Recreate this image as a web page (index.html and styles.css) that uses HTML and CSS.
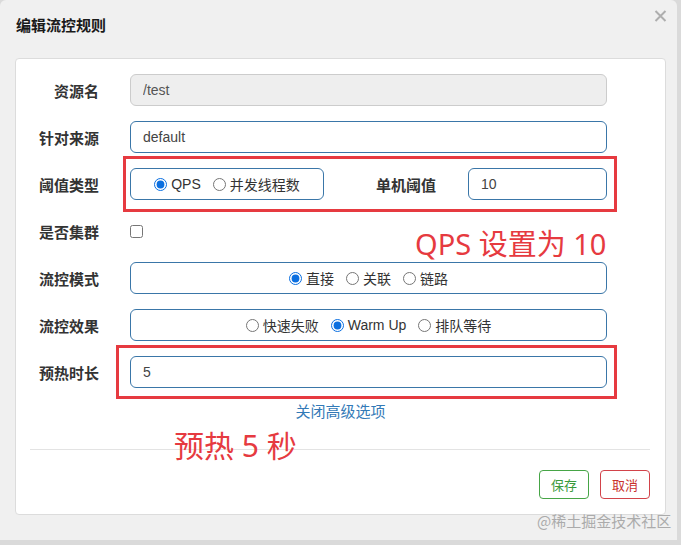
FILE: index.html
```html
<!DOCTYPE html>
<html lang="zh-CN">
<head>
    <meta charset="UTF-8">
    <meta name="viewport" content="width=device-width, initial-scale=1.0">
    <title>编辑流控规则</title>
    <link rel="stylesheet" href="styles.css">
</head>
<body>
    <div class="dialog">
        <!-- Cabecera -->
        <div class="dialog-header">
            <h4 class="dialog-title">编辑流控规则</h4>
            <button class="close" type="button">
                <svg width="13" height="12" viewBox="0 0 13 12">
                    <path d="M1.5 1 L11.5 11 M11.5 1 L1.5 11" stroke="#aeaeae" stroke-width="2" fill="none"/>
                </svg>
            </button>
        </div>

        <div class="dialog-body">
            <div class="panel">
                <form class="rule-form">
                    <div class="form-row">
                        <label class="form-label">资源名</label>
                        <input class="form-control" type="text" value="/test" disabled>
                    </div>

                    <div class="form-row">
                        <label class="form-label">针对来源</label>
                        <input class="form-control" type="text" value="default">
                    </div>

                    <div class="form-row">
                        <label class="form-label">阈值类型</label>
                        <div class="split">
                            <div class="radio-group small">
                                <label class="radio"><input type="radio" name="grade" checked>QPS</label>
                                <label class="radio"><input type="radio" name="grade">并发线程数</label>
                            </div>
                            <label class="form-label inline">单机阈值</label>
                            <input class="form-control count" type="text" value="10">
                        </div>
                    </div>

                    <div class="form-row">
                        <label class="form-label">是否集群</label>
                        <div><input class="check" type="checkbox"></div>
                    </div>

                    <div class="form-row">
                        <label class="form-label">流控模式</label>
                        <div class="radio-group">
                            <label class="radio"><input type="radio" name="strategy" checked>直接</label>
                            <label class="radio"><input type="radio" name="strategy">关联</label>
                            <label class="radio"><input type="radio" name="strategy">链路</label>
                        </div>
                    </div>

                    <div class="form-row">
                        <label class="form-label">流控效果</label>
                        <div class="radio-group">
                            <label class="radio"><input type="radio" name="behavior">快速失败</label>
                            <label class="radio"><input type="radio" name="behavior" checked>Warm Up</label>
                            <label class="radio"><input type="radio" name="behavior">排队等待</label>
                        </div>
                    </div>

                    <div class="form-row">
                        <label class="form-label">预热时长</label>
                        <input class="form-control" type="text" value="5">
                    </div>
                </form>

                <div class="advanced"><a href="#">关闭高级选项</a></div>
                <div class="divider"></div>

                <div class="footer">
                    <button class="btn btn-save" type="button">保存</button>
                    <button class="btn btn-cancel" type="button">取消</button>
                </div>
            </div>
        </div>

        <!-- Anotaciones en rojo -->
        <div class="mark mark-grade"></div>
        <div class="mark mark-warmup"></div>
        <div class="note note-qps">QPS 设置为 10</div>
        <div class="note note-warmup">预热 5 秒</div>

        <div class="watermark">@稀土掘金技术社区</div>
    </div>
</body>
</html>
```

FILE: styles.css
```css
/* General */
body {
    margin: 0;
    background: #dadada;
    font-family: "Liberation Sans", "Noto Sans CJK SC", sans-serif;
    color: #333;
}

/* Ventana */
.dialog {
    position: relative;
    width: 677px;
    height: 540px;
    background: #f0f0f0;
    border-radius: 6px 6px 0 0;
    box-shadow: 0 5px 0 #7d7d7d;
}

.dialog-header {
    height: 58px;
    display: flex;
    justify-content: space-between;
    padding: 0 10px 0 16px;
    box-sizing: border-box;
}

.dialog-title {
    margin: 0;
    padding-top: 16px;
    font-size: 15px;
    line-height: 20px;
    font-weight: 700;
    color: #1a1a1a;
}

.close {
    border: none;
    background: none;
    padding: 0;
    margin-top: 10px;
    height: 12px;
    cursor: pointer;
}

.dialog-body {
    padding: 0 11px 0 15px;
}

/* Panel blanco */
.panel {
    background: #fff;
    border: 1px solid #dcdcdc;
    border-radius: 4px;
    padding: 15px 0 15px;
    height: 457px;
    box-sizing: border-box;
}

.rule-form {
    margin: 0;
}

.form-row {
    display: grid;
    grid-template-columns: 83px 477px;
    column-gap: 31px;
    align-items: center;
    height: 32px;
    margin-bottom: 15px;
}

.form-label {
    text-align: right;
    font-size: 15px;
    font-weight: 700;
    color: #333;
}

.form-control {
    height: 32px;
    box-sizing: border-box;
    border: 1px solid #3a76a8;
    border-radius: 6px;
    padding: 0 12px;
    font-family: "Liberation Sans", "Noto Sans CJK SC", sans-serif;
    font-size: 14px;
    color: #444;
    background: #fff;
    width: 100%;
    outline: none;
}

.form-control:disabled {
    background: #eee;
    border-color: #ccc;
    color: #555;
}

/* Fila de umbral */
.split {
    display: flex;
    align-items: center;
}

.split .inline {
    flex: 1;
    padding-right: 32px;
}

.split .count {
    width: 139px;
}

/* Radios */
.radio-group {
    height: 32px;
    box-sizing: border-box;
    border: 1px solid #3a76a8;
    border-radius: 6px;
    display: flex;
    justify-content: center;
    align-items: center;
    gap: 12px;
}

.radio-group.small {
    width: 194px;
}

.radio {
    display: flex;
    align-items: center;
    font-size: 14px;
    color: #333;
}

.radio input {
    width: 13px;
    height: 13px;
    margin: 0 4px 0 0;
    accent-color: #0b6fe0;
}

.check {
    width: 13px;
    height: 13px;
    margin: 5px 0 0;
}

/* Enlace y pie */
.advanced {
    text-align: center;
    line-height: 18px;
    margin-top: 0;
}

.advanced a {
    font-size: 15px;
    color: #337ab7;
    text-decoration: none;
}

.divider {
    height: 1px;
    background: #e3e3e3;
    margin: 28px 15px 0 14px;
}

.footer {
    display: flex;
    justify-content: flex-end;
    gap: 11px;
    padding: 20px 15px 0 0;
}

.btn {
    width: 50px;
    height: 29px;
    border-radius: 4px;
    background: #fff;
    font-family: "Liberation Sans", "Noto Sans CJK SC", sans-serif;
    font-size: 13px;
    cursor: pointer;
}

.btn-save {
    border: 1px solid #46a546;
    color: #3b9a3b;
}

.btn-cancel {
    border: 1px solid #d2434a;
    color: #c9302c;
}

/* Anotaciones */
.mark {
    position: absolute;
    border: 3px solid #e63a40;
    box-sizing: border-box;
}

.mark-grade {
    left: 123px;
    top: 156px;
    width: 494px;
    height: 56px;
}

.mark-warmup {
    left: 116px;
    top: 345px;
    width: 501px;
    height: 54px;
}

.note {
    position: absolute;
    color: #e63a40;
    font-family: "Noto Sans", "Noto Sans CJK SC", sans-serif;
    white-space: nowrap;
}

.note-qps {
    left: 415px;
    top: 221px;
    font-size: 29px;
}

.note-warmup {
    left: 174px;
    top: 422px;
    font-size: 30px;
}

.watermark {
    position: absolute;
    left: 537px;
    top: 510px;
    font-size: 15px;
    color: #ababab;
    white-space: nowrap;
    font-family: "Noto Sans CJK SC", sans-serif;
}
```
